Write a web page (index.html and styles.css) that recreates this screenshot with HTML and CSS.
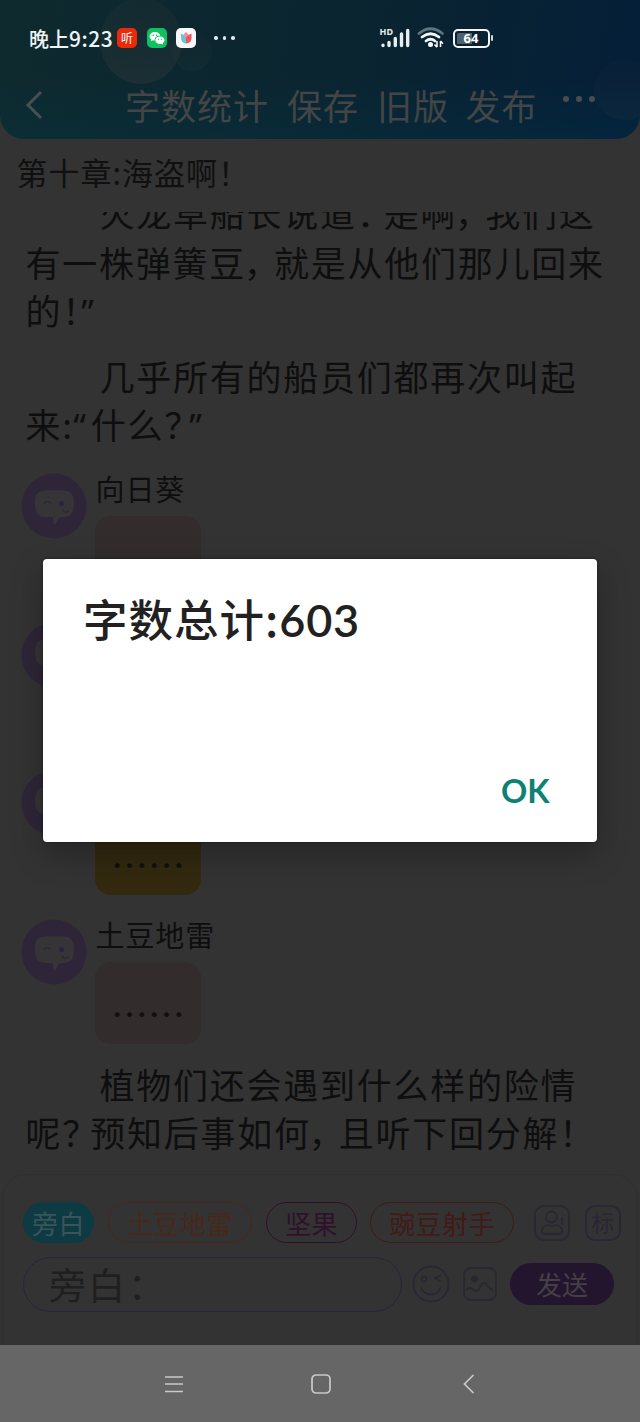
FILE: index.html
```html
<!DOCTYPE html>
<html lang="zh-CN">
<head>
<meta charset="utf-8">
<title>字数统计</title>
<link rel="stylesheet" href="styles.css">
</head>
<body>
<div class="screen">
  <header class="header">
    <i class="bubble-deco deco-a"></i><i class="bubble-deco deco-b"></i><i class="bubble-deco deco-c"></i>
    <div class="status">
      <span class="clock">晚上<span class="clock-num">9:23</span></span>
      <span class="app app-red">听</span>
      <span class="app app-green"><svg viewBox="0 0 20 20"><path fill="#fff" d="M8 4C4.8 4 2.6 5.9 2.6 8.3c0 1.300.700 2.500 1.800 3.300l-.5 1.700 2-1c.6.200 1.300.300 1.900.300C7.200 9.500 10 7.500 13.300 7.800 12.900 5.600 10.700 4 8 4z"/><path fill="#fff" d="M13 8.500c-2.700 0-4.700 1.700-4.700 3.700s2 3.700 4.700 3.700c.5 0 1-.1 1.500-.2l1.700.9-.4-1.500c1-.7 1.700-1.700 1.700-2.900 0-2-2-3.700-4.500-3.700z"/><g fill="#0bc160"><circle cx="6.200" cy="7.200" r=".8"/><circle cx="9.700" cy="7.200" r=".8"/><circle cx="11.500" cy="11.300" r=".6"/><circle cx="14.500" cy="11.300" r=".6"/></g></svg></span>
      <span class="app app-white"><svg viewBox="0 0 20 20"><path fill="#62c5dc" d="M5 5.500l5 3v7c-3.500-.5-5-2.500-5-5.500z"/><path fill="#f0525c" d="M15.500 5.500L10 8.500v7c4-.5 5.500-2.500 5.500-5.500z"/><path fill="#f58a95" d="M10 4l2.800 2.800L10 9 7.300 6.800z"/></svg></span>
      <span class="more"><i></i><i></i><i></i></span>
      <span class="signal"><svg viewBox="0 0 32 22"><text x="-.5" y="7.500" class="hd">HD</text><g stroke="#e6edf0" stroke-width="3.400" stroke-linecap="round"><path d="M3 18.300v.2M9 15.500v3M15.300 11.500v7M21.500 7v11.500M27.700 3.500v15"/></g></svg></span>
      <svg class="wifi" viewBox="0 0 28 22"><g fill="none" stroke-width="2.800" stroke-linecap="round"><path stroke="#5c7680" d="M2 6.500Q13.500-3 25.500 6.500"/><path stroke="#f0f5f6" d="M5 10Q13.500 3.500 22 10M9 14Q13.500 10.500 18 14"/></g><circle cx="13.500" cy="17.500" r="2.500" fill="#fff"/><path d="M20 20v-6M17.500 17.500l2.500 2.700M23.500 14v6M23.500 14l2.500 2.700" stroke="#fff" stroke-width="1.500"/></svg>
      <span class="battery"><b>64</b></span><i class="tip"></i>
    </div>
    <nav class="toolbar">
      <svg class="back" viewBox="0 0 20 32"><path d="M17 3L4 16l13 13" fill="none" stroke="#455052" stroke-width="3"/></svg>
      <span class="t1">字数统计</span><span class="t2">保存</span><span class="t3">旧版</span><span class="t4">发布</span>
      <span class="dots"><i></i><i></i><i></i></span>
    </nav>
  </header>
  <h1 class="chapter">第十章<span class="p colon">:</span>海盗啊<span class="p bang">！</span></h1>
  <main class="content">
    <p class="para first"><span class="indent"></span>火龙草船长说道<span class="p zcolon">：</span><span class="p quote opening">“</span>是啊<span class="p comma">，</span>我们这<br>有一株弹簧豆<span class="p comma">，</span>就是从他们那儿回来<br>的<span class="p bang">！</span><span class="p quote">”</span></p>
    <p class="para"><span class="indent"></span>几乎所有的船员们都再次叫起<br>来<span class="p colon">:</span><span class="p quote">“</span>什么<span class="p ask">？</span><span class="p quote closing">”</span></p>
    <section class="chat">
      <div class="msg"><svg class="avatar" viewBox="0 0 66 66"><use href="#face"/></svg><div><div class="name">向日葵</div><div class="talk"></div></div></div>
      <div class="msg"><svg class="avatar" viewBox="0 0 66 66"><use href="#face"/></svg></div>
      <div class="msg"><svg class="avatar" viewBox="0 0 66 66"><use href="#face"/></svg><div><div class="name"></div><div class="talk gold"><span>……</span></div></div></div>
      <div class="msg"><svg class="avatar" viewBox="0 0 66 66"><g id="face"><circle cx="33" cy="33" r="32.500" fill="#2e2638"/><path fill="#363436" d="M24 17.500h19c7 0 10 4 10 13S50 43 44 44h-3c-3 .5-4 2-5 4l-2 4c-1.500-1-2-4-2-8h-8c-7 0-10-5-10-13.500s3-13 10-13z"/><path d="M23 30.500q3.500-4 7 0M41 37q4 4 7 1" stroke="#292832" stroke-width="1.200" fill="none"/><circle cx="40.500" cy="30.500" r="2.500" fill="#282442"/></g></svg><div><div class="name">土豆地雷</div><div class="talk"><span>……</span></div></div></div>
    </section>
    <p class="para last"><span class="indent"></span>植物们还会遇到什么样的险情<br>呢<span class="p ask">？</span>预知后事如何<span class="p comma">，</span>且听下回分解<span class="p bang">！</span></p>
  </main>
  <footer class="composer">
    <div class="chips">
      <span class="chip teal">旁白</span><span class="chip orange">土豆地雷</span><span class="chip plum">坚果</span><span class="chip red">豌豆射手</span>
      <svg class="tool person" viewBox="0 0 36 36"><rect x="1" y="1" width="34" height="34" rx="9"/><circle cx="17.500" cy="12" r="5.500"/><path d="M13 20c-3 1-5 3-5 6 0 2 1 3 3 3h14c2 0 3-1 3-3 0-3-2-5-5-6q-5 2-10 0zM28 12v8"/></svg>
      <span class="tag">标</span>
    </div>
    <div class="entry">
      <span class="field">旁白<span class="field-colon">：</span></span>
      <svg class="smile" viewBox="0 0 38 38"><circle cx="19" cy="19" r="17.500"/><circle cx="12" cy="14" r="2.500"/><path d="M29 10l-6 3.500 6 3M9 22c3 10 17 10 20 0"/></svg>
      <svg class="photo" viewBox="0 0 34 34"><rect x="1" y="1" width="32" height="32" rx="7"/><circle class="solid" cx="11.500" cy="12" r="2.500"/><path d="M3 23c3-3 6-2 8 0 2 2 4 1 5-1 3-7 6-8 8-4 2 3 4 3 6 6"/></svg>
      <span class="send">发送</span>
    </div>
  </footer>
  <div class="sysnav">
    <svg viewBox="0 0 20 20"><path d="M1 3h18M1 10h18M1 17.500h18"/></svg>
    <svg viewBox="0 0 20 20"><rect x="1" y="1" width="18" height="18" rx="4"/></svg>
    <svg viewBox="0 0 20 20"><path d="M15.500 1L6.500 10l9 9"/></svg>
  </div>
  <div class="dialog">
    <h2>字数总计:<span>603</span></h2>
    <span class="ok">OK</span>
  </div>
</div>
</body>
</html>
```
FILE: styles.css
```css
* { box-sizing: border-box; }
body { margin: 0; background: #333; font-family: "Noto Sans CJK SC", sans-serif; }
h1, h2, p { margin: 0; font-weight: 400; }
svg { display: block; flex: none; overflow: visible; }
.screen { position: relative; width: 640px; height: 1422px; overflow: hidden; background: #333; display: flex; flex-direction: column; }

.header { position: relative; height: 139px; flex: none; overflow: hidden; border-radius: 0 0 24px 24px; background: linear-gradient(180deg, rgba(0,60,80,0) 55%, rgba(0,60,80,.22)), linear-gradient(100deg, #0e2a2e, #0a2430 55%, #051f38 95%); }
.bubble-deco { position: absolute; border-radius: 50%; background: linear-gradient(rgba(60,60,60,.12), rgba(70,68,68,.26)); }
.deco-a { left: 100px; top: -2px; width: 82px; height: 86px; }
.deco-b { left: 172px; top: 31px; width: 40px; height: 40px; opacity: .4; }
.deco-c { left: 594px; top: 60px; width: 62px; height: 60px; opacity: .4; }
.status { position: relative; height: 76px; padding-left: 29px; display: flex; align-items: center; color: #eef3f4; }
.clock { width: 88px; font-size: 20px; font-weight: 500; line-height: 24px; white-space: nowrap; }
.clock-num { font-size: 21px; letter-spacing: .5px; }
.app { width: 20px; height: 20px; border-radius: 5px; flex: none; margin-right: 9.500px; }
.app svg { width: 20px; height: 20px; }
.app-red { background: #ec2a0a; color: #fff; font-size: 12px; line-height: 19px; text-align: center; }
.app-green { background: #0bc160; }
.app-white { background: #f8f8fa; margin-right: 18px; }
.more { display: flex; gap: 5px; width: 165.500px; }
.more i { width: 3.500px; height: 3.500px; border-radius: 50%; background: #dfe9ec; }
.signal { width: 32px; margin-right: 5px; }
.signal svg { width: 32px; height: 22px; }
.hd { font: 700 9px "Noto Sans", sans-serif; fill: #e6edf0; }
.wifi { width: 28px; height: 22px; margin-right: 8px; }
.battery { width: 37px; height: 19px; border: 2px solid #f2f6f7; border-radius: 5px; text-align: center; background: linear-gradient(90deg, #4d626c 55%, transparent 55%) content-box; padding: 1.500px; }
.battery b { display: block; font: 700 13px/12px "Noto Sans", sans-serif; color: #fff; }
.tip { width: 2px; height: 6px; margin-left: 1.500px; background: #cfdade; border-radius: 1px; }
.toolbar { position: relative; height: 61px; display: flex; align-items: center; padding-left: 24px; font-size: 35px; letter-spacing: 1px; line-height: 60px; color: #434546; white-space: nowrap; margin-top: -1.500px; }
.back { width: 20px; height: 32px; margin-right: 81px; }
.t1 { width: 162px; }
.t2 { width: 90px; }
.t3 { width: 88.500px; }
.t4 { width: 97.500px; }
.dots { display: flex; gap: 7.500px; padding-bottom: 12px; }
.dots i { width: 5.500px; height: 5.500px; border-radius: 50%; background: #484c4e; }

.chapter { flex: none; height: 73px; padding-left: 16.500px; font-size: 31px; letter-spacing: 1px; line-height: 66px; color: #101010; white-space: nowrap; }
.p { display: inline-block; font-feature-settings: "palt"; white-space: nowrap; }
.comma { width: 28px; }
.bang { width: 19px; }
.ask { width: 28px; }
.colon { width: 11px; }
.chapter .colon { width: 9.500px; }
.zcolon { width: 13px; }
.quote { width: 17.500px; font-family: "Noto Sans", sans-serif; }
.opening { width: 14px; }
.closing { position: relative; left: -3px; }
.content { flex: none; height: 962px; overflow: hidden; }
.para { padding-left: 25.500px; font-size: 35px; letter-spacing: 1.750px; line-height: 48px; color: #0e0e0e; white-space: nowrap; }
.first { margin-top: -24px; margin-bottom: 18px; }
.first + .para { margin-top: -2px; }
.indent { display: inline-block; width: 74px; }
.chat { padding: 24px 0 0 21px; }
.msg { display: flex; gap: 8.500px; height: 148.700px; }
.avatar { width: 66px; height: 66px; margin-top: -1px; }
.name { height: 42px; font-size: 29px; letter-spacing: .9px; line-height: 29px; color: #0e0e0e; }
.talk { width: 106px; height: 82px; border-radius: 16px; background: #322c2c; padding: 41px 0 0 16px; margin-left: -.5px; color: #101010; }
.talk span { display: block; font: 37px/20px "Noto Sans CJK SC", sans-serif; }
.gold { background: #32290f; }
.last { margin-top: -8.500px; }

.composer { flex: none; height: 171px; margin: 0 2px; padding: 27px 0 0 21px; border: 1px solid #303033; border-bottom: 0; border-radius: 24px 24px 0 0; background: #333; }
.chips, .entry { display: flex; align-items: center; }
.chips { height: 41px; margin-left: -1px; }
.chip { height: 41px; border: 1.500px solid; border-radius: 21px; line-height: 39px; font-size: 26px; letter-spacing: .4px; text-align: center; flex: none; }
.teal { width: 71px; margin-right: 14px; background: #0e3a44; border-color: #0e3a44; color: #3a5558; }
.orange { width: 144px; margin-right: 14px; color: #49281a; }
.plum { width: 91px; margin-right: 13px; color: #30102a; }
.red { width: 144px; margin-right: 20px; color: #421a16; }
.tool, .smile, .photo { fill: none; stroke: #2a2633; stroke-width: 1.800; }
.tool { width: 36px; height: 36px; margin-right: 15px; }
.tag { width: 36px; height: 36px; border: 2px solid #2a2633; border-radius: 10px; color: #2a2633; font-size: 23px; line-height: 29px; text-align: center; }
.entry { margin: 13px 0 0 -1px; height: 56px; }
.field { width: 379px; height: 55px; border: 1.500px solid #28253a; border-radius: 28px; padding-left: 25px; font-size: 37px; letter-spacing: 2px; line-height: 52px; color: #1f1f1f; margin-right: 10px; white-space: nowrap; overflow: hidden; }
.field-colon { margin-left: 1px; }
.smile { width: 38px; height: 38px; margin-right: 12.500px; }
.photo { width: 34px; height: 34px; margin-right: 13.500px; }
.photo .solid { fill: #2a2633; }
.send { width: 104px; height: 42px; border-radius: 21px; background: #24152f; color: #454047; font-size: 26px; line-height: 41px; text-align: center; }

.sysnav { flex: none; height: 77px; background: #666; padding: 0 162px 0 164px; display: flex; align-items: center; justify-content: space-between; }
.sysnav svg { width: 20px; height: 20px; fill: none; stroke: #c9c9c9; stroke-width: 1.700; }

.dialog { position: absolute; left: 43px; top: 559px; width: 554px; height: 283px; padding: 31px 47.500px 0 40px; border-radius: 4px; background: #fff; box-shadow: 0 12px 32px rgba(0,0,0,.28), 0 0 3px rgba(0,0,0,.4); display: flex; flex-direction: column; justify-content: space-between; }
.dialog h2 { font-size: 44.500px; font-weight: 500; letter-spacing: 1px; line-height: 56px; color: #212121; white-space: nowrap; }
.dialog h2 span { font-family: Lato, sans-serif; font-weight: 600; font-size: 45px; letter-spacing: .8px; }
.ok { align-self: flex-end; padding-bottom: 31px; font: 700 32.500px/40px Lato, sans-serif; color: #0e8074; }
```
